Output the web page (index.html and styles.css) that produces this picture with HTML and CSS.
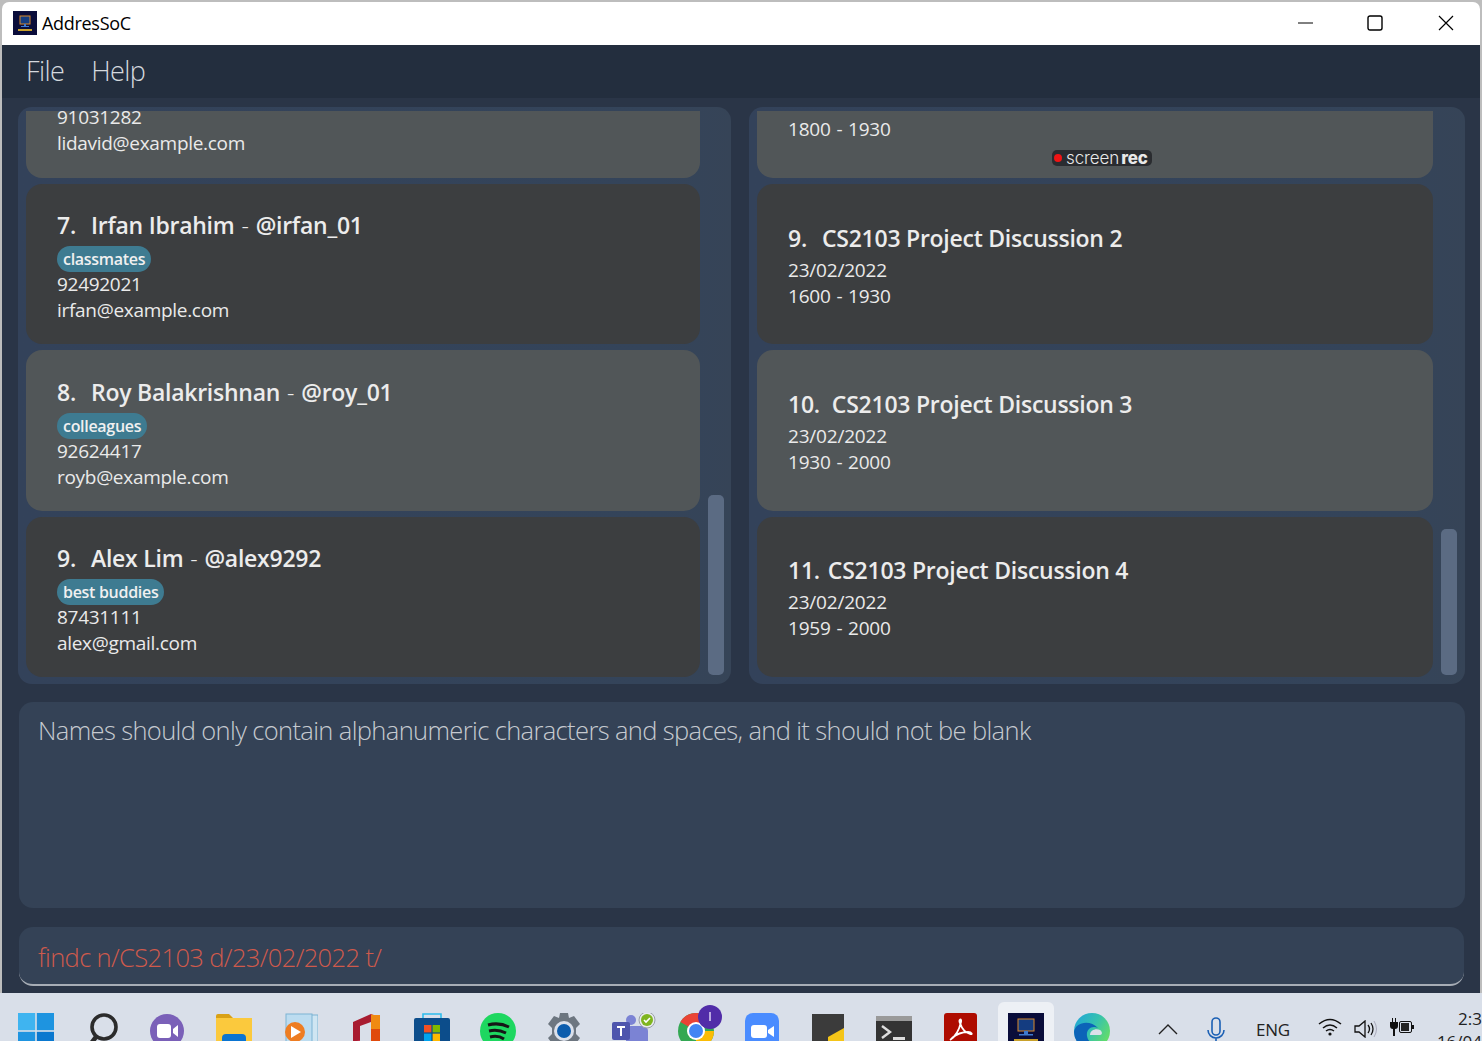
FILE: index.html
```html
<!DOCTYPE html>
<html lang="en">
<head>
    <meta charset="UTF-8">
    <meta name="viewport" content="width=device-width, initial-scale=1.0">
    <title>AddresSoC</title>
    <link rel="stylesheet" href="styles.css">
</head>
<body>
  <div class="window">
    <!-- Title bar -->
    <div class="titlebar">
      <svg class="app-logo" viewBox="0 0 24 24">
        <rect width="24" height="24" fill="#0a0d3a"/>
        <rect x="7" y="5" width="10" height="8" fill="#143c80" stroke="#d98a2b"/>
        <rect x="11" y="13" width="2" height="2" fill="#3d7ad0"/>
        <rect x="8" y="15" width="8" height="1" fill="#3d7ad0"/>
        <rect x="5" y="18" width="14" height="2" fill="#c9a12b"/>
      </svg>
      <span class="app-name">AddresSoC</span>
      <div class="win-controls">
        <svg class="win-btn" viewBox="0 0 16 16"><path d="M0 8h15" stroke="#000" fill="none"/></svg>
        <svg class="win-btn" viewBox="0 0 16 16"><rect x="1" y="1" width="14" height="14" rx="2" stroke="#000" stroke-width="1.4" fill="none"/></svg>
        <svg class="win-btn" viewBox="0 0 16 16"><path d="M1 1l14 14M15 1L1 15" stroke="#000" stroke-width="1.2" fill="none"/></svg>
      </div>
    </div>

    <!-- Menu -->
    <div class="menubar">
      <span class="menu-item">File</span>
      <span class="menu-item">Help</span>
    </div>

    <div class="main">
      <div class="lists">
        <!-- Person list -->
        <div class="panel">
          <div class="list list-left">
            <div class="card card-cut">
              <div class="card-line">91031282</div>
              <div class="card-line">lidavid@example.com</div>
            </div>
            <div class="card">
              <div class="card-title"><span class="num">7.</span>Irfan Ibrahim<span class="dash">-</span>@irfan_01</div>
              <div class="tag-row"><span class="tag">classmates</span></div>
              <div class="card-line">92492021</div>
              <div class="card-line">irfan@example.com</div>
            </div>
            <div class="card card-light">
              <div class="card-title"><span class="num">8.</span>Roy Balakrishnan<span class="dash">-</span>@roy_01</div>
              <div class="tag-row"><span class="tag">colleagues</span></div>
              <div class="card-line">92624417</div>
              <div class="card-line">royb@example.com</div>
            </div>
            <div class="card">
              <div class="card-title"><span class="num">9.</span>Alex Lim<span class="dash">-</span>@alex9292</div>
              <div class="tag-row"><span class="tag">best buddies</span></div>
              <div class="card-line">87431111</div>
              <div class="card-line">alex@gmail.com</div>
            </div>
          </div>
          <div class="thumb thumb-left"></div>
        </div>

        <!-- Event list -->
        <div class="panel">
          <div class="list list-right">
            <div class="card card-cut event">
              <div class="card-line">23/02/2022</div>
              <div class="card-line time">1800 - 1930</div>
            </div>
            <div class="card event">
              <div class="card-title"><span class="num">9.</span>CS2103 Project Discussion 2</div>
              <div class="card-line">23/02/2022</div>
              <div class="card-line time">1600 - 1930</div>
            </div>
            <div class="card card-light event">
              <div class="card-title"><span class="num num-ten">10.</span>CS2103 Project Discussion 3</div>
              <div class="card-line">23/02/2022</div>
              <div class="card-line time">1930 - 2000</div>
            </div>
            <div class="card event">
              <div class="card-title"><span class="num num-eleven">11.</span>CS2103 Project Discussion 4</div>
              <div class="card-line">23/02/2022</div>
              <div class="card-line time">1959 - 2000</div>
            </div>
          </div>
          <div class="thumb thumb-right"></div>
          <div class="rec-badge"><i class="rec-dot"></i>screen<b>rec</b></div>
        </div>
      </div>

      <div class="result">Names should only contain alphanumeric characters and spaces, and it should not be blank</div>
      <div class="command">findc n/CS2103 d/23/02/2022 t/</div>
    </div>
  </div>

  <!-- Taskbar -->
  <div class="taskbar">
    <div class="slot"><svg viewBox="0 0 36 36"><rect width="17.2" height="17.2" fill="#3fb4f0"/><rect x="18.8" width="17.2" height="17.2" fill="#1e94e0"/><rect y="18.8" width="17.2" height="17.2" fill="#1e94e0"/><rect x="18.8" y="18.8" width="17.2" height="17.2" fill="#0a78cf"/></svg></div>
    <div class="slot"><svg viewBox="0 0 36 36"><circle cx="20" cy="14" r="12" fill="none" stroke="#2b2b2b" stroke-width="3.6"/><path d="M12 24L5 33" stroke="#2b2b2b" stroke-width="4.5" fill="none"/></svg></div>
    <div class="slot"><svg viewBox="0 0 36 36"><circle cx="17" cy="18" r="17" fill="#7a60b8"/><rect x="7" y="11" width="14" height="14" rx="3" fill="#fff"/><path d="M23 16l5-4v12l-5-4z" fill="#fff"/></svg></div>
    <div class="slot"><svg viewBox="0 0 36 36"><path d="M0 3q0-2 2-2h11l4 4h-17z" fill="#d9a116"/><rect y="5" width="36" height="31" fill="#fbc93d"/><rect x="6" y="21" width="24" height="15" rx="4" fill="#0b74d1"/></svg></div>
    <div class="slot"><svg viewBox="0 0 36 36"><rect x="8" y="2" width="28" height="34" fill="#cfe5f2" stroke="#7db3d3"/><rect x="4" y="1" width="26" height="35" fill="#bcdcf0" stroke="#7db3d3"/><circle cx="13" cy="19" r="10" fill="#ee7d22"/><path d="M9 13l10 6-10 6z" fill="#fff"/></svg></div>
    <div class="slot"><svg viewBox="0 0 36 36"><path d="M5 9L23 1v8L12 13v16H5z" fill="#a81c30"/><path d="M5 29l7-2v5l-7 3z" fill="#c43a5c"/><path d="M23 1l9 3v32H12v-6h11z" fill="#e04a0c"/><rect x="23" y="2" width="9" height="14" fill="#f08a12"/></svg></div>
    <div class="slot"><svg viewBox="0 0 36 36"><path d="M9 6V1h18v5" fill="none" stroke="#2dbcec" stroke-width="1.6"/><rect y="5" width="36" height="31" rx="2" fill="#0c4d8b"/><rect x="10" y="12" width="7.4" height="7.4" fill="#f25022"/><rect x="18.6" y="12" width="7.4" height="7.4" fill="#7fba00"/><rect x="10" y="20.6" width="7.4" height="7.4" fill="#00a4ef"/><rect x="18.6" y="20.6" width="7.4" height="7.4" fill="#ffb900"/></svg></div>
    <div class="slot"><svg viewBox="0 0 36 36"><circle cx="18" cy="18" r="18" fill="#1ed760"/><path d="M8 12q11-3 21 2M9 18q9-2 17 2M10 24q8-2 14 2" fill="none" stroke="#161616" stroke-width="3"/></svg></div>
    <div class="slot"><svg viewBox="0 0 36 36"><path d="M14 0h8l1 5 5-2 6 8-4 4v6l4 4-6 8-5-2-1 5h-8l-1-5-5 2-6-8 4-4v-6L2 11l6-8 5 2z" fill="#6d7680"/><circle cx="18" cy="18" r="10" fill="#dbe0ea"/><circle cx="18" cy="18" r="7" fill="#0b5cad"/></svg></div>
    <div class="slot slot-wide"><svg viewBox="0 0 44 36"><circle cx="19" cy="7" r="5" fill="#7b83d4"/><rect x="14" y="13" width="22" height="23" rx="5" fill="#7b83d4"/><rect y="9" width="18" height="18" rx="2" fill="#4e55ad"/><path d="M5 13h8v2h-3v8H8v-8H5z" fill="#fff"/><circle cx="35" cy="7" r="8" fill="#e8eaee" stroke="#9aa0a8"/><circle cx="35" cy="7" r="6" fill="#7fb51f"/><path d="M32 7l2 2 4-4" stroke="#fff" stroke-width="1.6" fill="none"/></svg></div>
    <div class="slot"><svg viewBox="0 0 36 36"><circle cx="18" cy="18" r="18" fill="#34a853"/><path d="M18 18L2.4 9A18 18 0 0 1 33.6 9z" fill="#ea4335"/><path d="M18 18h18a18 18 0 0 1-18 18z" fill="#fbbc05"/><circle cx="18" cy="18" r="9" fill="#fff"/><circle cx="18" cy="18" r="7" fill="#4285f4"/></svg><span class="chrome-badge"></span></div>
    <div class="slot"><svg viewBox="0 0 36 36"><rect x="1" width="34" height="36" rx="8" fill="#4a8cff"/><rect x="7" y="12" width="16" height="13" rx="3" fill="#fff"/><path d="M24 17l6-4v11l-6-4z" fill="#fff"/></svg></div>
    <div class="slot"><svg viewBox="0 0 36 36"><rect x="2" y="1" width="32" height="35" fill="#3b3b3b"/><path d="M18 36V24l16-9v21z" fill="#f5c518"/></svg></div>
    <div class="slot"><svg viewBox="0 0 36 36"><rect y="3" width="36" height="33" rx="2" fill="#333"/><rect y="3" width="36" height="5" fill="#9a9a9a"/><path d="M6 13l8 6-8 6" fill="none" stroke="#ddd" stroke-width="2.4"/><rect x="17" y="24" width="12" height="3" fill="#ddd"/></svg></div>
    <div class="slot"><svg viewBox="0 0 36 36"><rect x="2" width="33" height="36" rx="3" fill="#ae0c00"/><path d="M8 27q8-5 11-18c1-4-3-3-1 1q3 9 10 11c3 1 2-2-2-2q-9 0-16 6" fill="none" stroke="#fff" stroke-width="1.8"/></svg></div>
    <div class="slot slot-active"><svg viewBox="0 0 36 36"><rect width="36" height="36" y="-1" fill="#0a0d3a"/><rect x="10" y="6" width="16" height="12" fill="#143c80" stroke="#d98a2b"/><rect x="16" y="18" width="4" height="3" fill="#3d7ad0"/><rect x="11" y="21" width="14" height="1.5" fill="#3d7ad0"/><rect x="6" y="26" width="24" height="3" fill="#c9a12b"/></svg></div>
    <div class="slot"><svg viewBox="0 0 36 36"><defs><linearGradient id="edge" x1="0" y1="0" x2="1" y2="0.6"><stop offset="0" stop-color="#1ea3dc"/><stop offset="0.55" stop-color="#35c1b0"/><stop offset="1" stop-color="#63dc6a"/></linearGradient></defs><circle cx="18" cy="18" r="18" fill="url(#edge)"/><path d="M0 19C1 9 16 6 24 15c-7-3-12 2-11 8 1 7 10 12 19 7A18 18 0 0 1 0 19z" fill="#0c63b8"/><path d="M16 22c0-5 6-7 10-5 3 2 2 5 0 5z" fill="#dbe0ea"/></svg></div>

    <div class="tray">
      <svg class="tray-chevron" viewBox="0 0 20 12"><path d="M1 11l9-9 9 9" fill="none" stroke="#222" stroke-width="1.4"/></svg>
      <svg class="tray-mic" viewBox="0 0 18 30"><rect x="5" y="1" width="8" height="17" rx="4" fill="none" stroke="#1a5fb4" stroke-width="1.6"/><path d="M1 13a8 8 0 0 0 16 0M9 21v9" fill="none" stroke="#1a5fb4" stroke-width="1.6"/></svg>
      <span class="tray-lang">ENG</span>
      <svg class="tray-wifi" viewBox="0 0 24 18"><path d="M1 6q11-9 22 0M5 10q7-6 14 0M8 13q4-3 8 0" fill="none" stroke="#111" stroke-width="1.5"/><circle cx="12" cy="16" r="1.6" fill="#111"/></svg>
      <svg class="tray-sound" viewBox="0 0 24 18"><path d="M1 6h4l6-5v16l-6-5H1z" fill="none" stroke="#111" stroke-width="1.3"/><path d="M14 5q3 4 0 8" fill="none" stroke="#111" stroke-width="1.3"/><path d="M17 3q4 6 0 12" fill="none" stroke="#111" stroke-width="1.3"/><path d="M20 1q5 8 0 16" fill="none" stroke="#aab" stroke-width="1"/></svg>
      <svg class="tray-battery" viewBox="0 0 24 18"><path d="M2 0v4h1V0zM5 0v4h1V0zM0 4h8v4q0 3-3 3v7H3v-7q-3 0-3-3z" fill="#111"/><rect x="9.5" y="3.5" width="12" height="11" rx="1.5" fill="#dbe0ea" stroke="#111"/><rect x="11" y="5" width="8" height="8" fill="#222"/><rect x="22" y="7" width="2" height="4" fill="#111"/></svg>
      <div class="clock"><span>2:3</span><span>16/04</span></div>
    </div>
  </div>
</body>
</html>
```

FILE: styles.css
```css
html, body {
    margin: 0;
    padding: 0;
    height: 100%;
}

body {
    width: 1482px;
    height: 1041px;
    overflow: hidden;
    background-color: #bdbdbd;
    font-family: "Open Sans", "Noto Sans", sans-serif;
    display: flex;
    flex-direction: column;
}

.window {
    margin: 2px 2px 0 2px;
    height: 991px;
    display: flex;
    flex-direction: column;
    border-radius: 7px 7px 0 0;
    overflow: hidden;
    flex-shrink: 0;
}

/* title bar */
.titlebar {
    height: 43px;
    box-sizing: border-box;
    background: #fff;
    display: flex;
    align-items: center;
    padding-left: 11px;
    padding-bottom: 2px;
    flex-shrink: 0;
}
.app-logo {
    width: 24px;
    height: 24px;
}
.app-name {
    margin-left: 5px;
    font-size: 18px;
    color: #000;
    letter-spacing: -0.3px;
}
.win-controls {
    margin-left: auto;
    display: flex;
    gap: 54px;
    padding-right: 26px;
}
.win-btn {
    width: 16px;
    height: 16px;
}
.win-btn:nth-child(2) {
    margin: 0 1px 0 -1px;
}

/* menu */
.menubar {
    height: 53px;
    box-sizing: border-box;
    padding-bottom: 2px;
    background: #232e3e;
    display: flex;
    align-items: center;
    gap: 27px;
    padding-left: 24px;
    flex-shrink: 0;
}
.menu-item {
    font-size: 27px;
    font-weight: 300;
    color: #d5d9de;
    letter-spacing: -0.6px;
}

.main {
    flex: 1;
    background: #2a3547;
    padding: 9px 15px 7px 16px;
    display: flex;
    flex-direction: column;
}

.lists {
    display: grid;
    grid-template-columns: 713px 716px;
    gap: 18px;
    height: 577px;
}

.panel {
    position: relative;
    background: linear-gradient(90deg, #33425a, #34445a 90%, #364457);
    border-radius: 14px;
    overflow: hidden;
}

.list {
    height: 567px;
    margin-top: 3px;
    display: flex;
    flex-direction: column;
    justify-content: flex-end;
    gap: 6px;
    overflow: hidden;
    padding-left: 8px;
}
.list-left {
    padding-right: 31px;
}
.list-right {
    padding-right: 32px;
}

.card {
    height: 160.33px;
    flex-shrink: 0;
    box-sizing: border-box;
    padding-left: 31px;
    padding-top: 4px;
    border-radius: 16px;
    background: #3c3e40;
    color: #eaeaea;
    display: flex;
    flex-direction: column;
    justify-content: center;
}
.card.event {
    padding-top: 2px;
}
.card-light {
    background: #515658;
}
/* first row is scrolled off: its background stops at the viewport edge */
.card-cut,
.card-cut.event {
    background: linear-gradient(transparent 93.33px, #515658 93.33px);
    justify-content: flex-end;
    padding-top: 0;
    padding-bottom: 22px;
}
.card-cut.event {
    padding-bottom: 36px;
}

.card-title {
    font-size: 23px;
    font-weight: 600;
    line-height: 33px;
    letter-spacing: -0.25px;
    color: #ececec;
    margin-bottom: 4px;
}
.num {
    margin-right: 15px;
}
.num-ten {
    margin-right: 12px;
}
.num-eleven {
    margin-right: 8px;
}
.dash {
    font-weight: 300;
    margin: 0 7px;
}
.card-line {
    font-size: 19px;
    line-height: 26px;
    letter-spacing: -0.3px;
}
.event .card-title {
    margin-bottom: 2px;
}
.event .card-line {
    letter-spacing: -0.2px;
}
.event .time {
    word-spacing: 1px;
}

.tag-row {
    height: 25px;
}
.tag {
    display: inline-block;
    background: #3e7b91;
    color: #f0f0f0;
    font-size: 16px;
    font-weight: 600;
    line-height: 26px;
    padding: 0 6px;
    border-radius: 13px;
    letter-spacing: -0.3px;
}

.thumb {
    position: absolute;
    width: 16px;
    background: #5b6b83;
    border-radius: 5px;
    bottom: 9px;
}
.thumb-left {
    left: 690px;
    height: 180px;
}
.thumb-right {
    left: 692px;
    height: 146px;
}

.rec-badge {
    position: absolute;
    left: 303px;
    top: 43px;
    width: 100px;
    height: 16px;
    box-sizing: border-box;
    padding-left: 14px;
    border-radius: 5px;
    background: #2a2c30;
    color: #e8e8e8;
    font-family: Inter, sans-serif;
    font-size: 17px;
    font-weight: 300;
    line-height: 16px;
    letter-spacing: -0.1px;
    white-space: nowrap;
}
.rec-badge b {
    font-weight: 800;
    margin-left: 2px;
    letter-spacing: -0.2px;
}
.rec-dot {
    position: absolute;
    left: 2px;
    top: 4px;
    width: 8px;
    height: 8px;
    border-radius: 50%;
    background: #f01414;
}

.result {
    margin: 18px 0 0 1px;
    height: 206px;
    box-sizing: border-box;
    padding: 9px 19px;
    background: #344256;
    border-radius: 14px;
    font-size: 25.5px;
    font-weight: 300;
    line-height: 38px;
    color: #c6cad0;
    letter-spacing: -0.63px;
}

.command {
    margin: 19px 1px 0 1px;
    height: 59px;
    box-sizing: border-box;
    padding: 11px 19px 0;
    background: #344256;
    border-radius: 14px;
    border-bottom: 2px solid #a7adb6;
    font-size: 25.5px;
    font-weight: 300;
    line-height: 38px;
    color: #cf5a4c;
    letter-spacing: -0.63px;
}

/* taskbar */
.taskbar {
    height: 48px;
    background: #d9dfe9;
    display: flex;
    padding-left: 3px;
    flex-shrink: 0;
    position: relative;
}
.slot {
    position: relative;
    width: 66px;
    flex-shrink: 0;
    display: flex;
    justify-content: center;
    padding-top: 20px;
    box-sizing: border-box;
}
.slot svg {
    width: 36px;
    height: 36px;
    flex-shrink: 0;
}
.slot-wide svg {
    width: 44px;
    margin-left: 8px;
}
.slot-active::before {
    content: "";
    position: absolute;
    left: 5px;
    right: 5px;
    top: 9px;
    height: 60px;
    border-radius: 6px;
    background: #edf0f5;
}
.slot-active svg {
    position: relative;
}
.chrome-badge {
    position: absolute;
    left: 35px;
    top: 12px;
    width: 24px;
    height: 24px;
    border-radius: 50%;
    background: #512ca8;
}
.chrome-badge::after {
    content: "";
    position: absolute;
    left: 11px;
    top: 7px;
    width: 2px;
    height: 9px;
    background: #b9a8e0;
}

.tray {
    position: absolute;
    left: 0;
    right: 0;
    top: 0;
    height: 48px;
    pointer-events: none;
}
.tray > * {
    position: absolute;
}
.tray-chevron {
    left: 1158px;
    top: 30px;
    width: 20px;
    height: 12px;
}
.tray-mic {
    left: 1207px;
    top: 24px;
    width: 18px;
    height: 30px;
}
.tray-lang {
    left: 1256px;
    top: 25px;
    font-size: 17px;
    color: #222;
    letter-spacing: -0.2px;
}
.tray-wifi {
    left: 1318px;
    top: 25px;
    width: 24px;
    height: 18px;
}
.tray-sound {
    left: 1354px;
    top: 27px;
    width: 24px;
    height: 18px;
}
.tray-battery {
    left: 1390px;
    top: 25px;
    width: 24px;
    height: 18px;
}
.clock {
    left: 1434px;
    top: 14px;
    width: 48px;
    display: flex;
    flex-direction: column;
    align-items: flex-end;
    font-size: 17px;
    line-height: 23px;
    color: #222;
    white-space: nowrap;
}
```
